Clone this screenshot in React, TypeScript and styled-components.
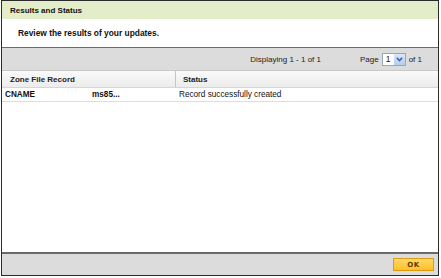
import React from "react";
import styled, { createGlobalStyle } from "styled-components";

const Global = createGlobalStyle`
  html, body { margin: 0; padding: 0; background: #fff; }
  body { font-family: "Liberation Sans", Arial, sans-serif; }
`;

const Frame = styled.div`
  box-sizing: border-box;
  margin-left: 1px;
  width: 438px;
  height: 276px;
  border: 1px solid #2b2b2b;
  display: flex;
  flex-direction: column;
  background: #fff;
`;

const TitleBar = styled.div`
  height: 18px;
  background: #e3edc9;
  display: flex;
  align-items: center;
  padding-left: 8px;
  font-size: 8px;
  font-weight: bold;
  color: #111;
`;

const Intro = styled.div`
  height: 28px;
  display: flex;
  align-items: center;
  padding-left: 16px;
  font-size: 8.4px;
  font-weight: bold;
  color: #111;
`;

const Toolbar = styled.div`
  height: 22px;
  border-top: 1px solid #6b6b6b;
  background: #dcdcdc;
  display: flex;
  align-items: center;
  justify-content: flex-end;
  padding-right: 16px;
  font-size: 8px;
  color: #222;
`;

const Displaying = styled.span`
  margin-right: 39px;
`;

const Pager = styled.div`
  display: flex;
  align-items: center;
  gap: 3px;
`;

const Select = styled.div`
  box-sizing: border-box;
  width: 24px;
  height: 13px;
  border: 1px solid #9aa7b8;
  background: #fff;
  display: flex;
  align-items: center;
  justify-content: space-between;
  padding-left: 3px;
  font-size: 8.5px;
`;

const Arrow = styled.span`
  width: 11px;
  height: 11px;
  background: linear-gradient(#dbe6f7, #b8cbec);
  display: flex;
  align-items: center;
  justify-content: center;
`;

const Grid = styled.div`
  flex: 1;
  display: flex;
  flex-direction: column;
`;

const HeadRow = styled.div`
  display: grid;
  grid-template-columns: 173px 1fr;
  height: 16px;
  border-top: 1px solid #c8c8c8;
  border-bottom: 1px solid #d6d6d6;
  background: linear-gradient(#fafafa, #ececec);
  font-size: 8px;
  font-weight: bold;
  color: #222;
`;

const HeadCell = styled.div<{ $pad: number; $divider?: boolean }>`
  display: flex;
  align-items: center;
  padding-left: ${(p) => p.$pad}px;
  border-left: ${(p) => (p.$divider ? "1px solid #c4c4c4" : "none")};
`;

const Row = styled.div`
  display: grid;
  grid-template-columns: 174px 1fr;
  height: 13px;
  border-bottom: 1px solid #dddddd;
  font-size: 8.2px;
  color: #111;
`;

const Cell = styled.div<{ $bold?: boolean; $pad: number }>`
  display: flex;
  align-items: center;
  padding-left: ${(p) => p.$pad}px;
  font-weight: ${(p) => (p.$bold ? "bold" : "normal")};
`;

const Type = styled.span`
  width: 87px;
`;

const Footer = styled.div`
  height: 21px;
  border-top: 2px solid #6a6a6a;
  background: #dcdcdc;
  display: flex;
  align-items: center;
  justify-content: flex-end;
  padding-right: 4px;
`;

const OkButton = styled.button`
  box-sizing: border-box;
  width: 41px;
  height: 13px;
  padding: 0;
  border: 1px solid #e09a10;
  background: linear-gradient(#ffd866, #ffbf2a);
  font-family: "DejaVu Sans", sans-serif;
  font-size: 7px;
  font-weight: bold;
  color: #5a3d00;
  letter-spacing: 0.5px;
`;

export default function App() {
  return (
    <>
      <Global />
      <Frame>
        <TitleBar>Results and Status</TitleBar>
        <Intro>Review the results of your updates.</Intro>
        <Toolbar>
          <Displaying>Displaying 1 - 1 of 1</Displaying>
          <Pager>
            <span>Page</span>
            <Select>
              1
              <Arrow>
                <svg width="7" height="5" viewBox="0 0 7 5">
                  <path d="M0.8 0.8 L3.5 3.6 L6.2 0.8" stroke="#3a5fa8" strokeWidth="1.5" fill="none" />
                </svg>
              </Arrow>
            </Select>
            <span>of 1</span>
          </Pager>
        </Toolbar>
        <Grid>
          <HeadRow>
            <HeadCell $pad={8}>Zone File Record</HeadCell>
            <HeadCell $pad={7} $divider>Status</HeadCell>
          </HeadRow>
          <Row>
            <Cell $bold $pad={3}>
              <Type>CNAME</Type>
              <span>ms85...</span>
            </Cell>
            <Cell $pad={3}>Record successfully created</Cell>
          </Row>
        </Grid>
        <Footer>
          <OkButton>OK</OkButton>
        </Footer>
      </Frame>
    </>
  );
}
